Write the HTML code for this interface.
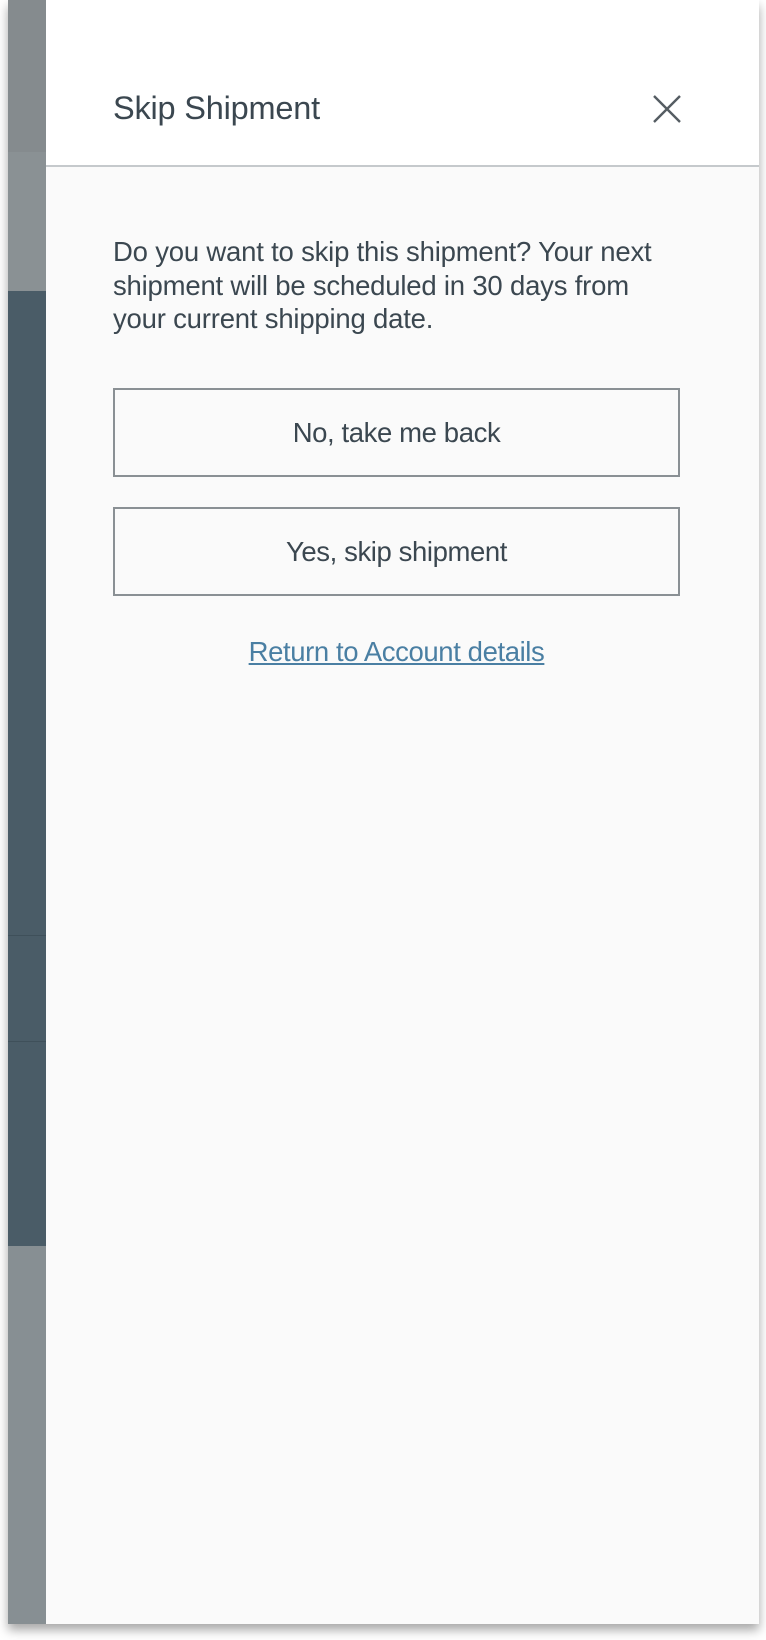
<!DOCTYPE html>
<html><head><meta charset="utf-8"><style>
html,body{margin:0;padding:0;width:766px;height:1640px;background:#fff;overflow:hidden;font-family:"Liberation Sans",sans-serif;}
.frame{position:absolute;left:8px;top:0;width:751px;height:1624px;box-shadow:0 6px 10px rgba(0,0,0,0.35);}
.strip{position:absolute;left:8px;width:38px;}
.panel{position:absolute;left:46px;top:0;width:713px;height:1624px;background:#fafafa;}
.head{position:absolute;left:0;top:0;width:713px;height:165px;background:#fff;border-bottom:2px solid #c5c9cc;}
.title{position:absolute;left:67px;top:90px;font-size:32.5px;color:#3b4750;letter-spacing:-0.2px;}
.close{position:absolute;left:606px;top:94px;}
.p{position:absolute;left:67px;top:235px;width:660px;font-size:27.5px;line-height:33.5px;color:#3b4750;letter-spacing:-0.2px;white-space:nowrap;}
.btn{position:absolute;left:67px;width:563px;height:85px;border:2px solid #8a9094;box-sizing:content-box;font-size:27.5px;color:#3b4750;text-align:center;line-height:85px;letter-spacing:-0.4px;}
.link{position:absolute;left:67px;width:567px;top:636px;text-align:center;font-size:27.5px;color:#4a7fa3;text-decoration:underline;letter-spacing:-0.4px;}
</style></head><body>
<div class="frame"></div>
<div class="strip" style="top:0;height:152px;background:#858b8e"></div>
<div class="strip" style="top:152px;height:139px;background:#8a9194"></div>
<div class="strip" style="top:291px;height:955px;background:#4a5c67"></div>
<div class="strip" style="top:935px;height:1px;background:#3f505a"></div>
<div class="strip" style="top:1041px;height:1px;background:#3f505a"></div>
<div class="strip" style="top:1246px;height:378px;background:#878f93"></div>
<div class="panel">
<div class="head">
<div class="title">Skip Shipment</div>
<svg class="close" width="30" height="30" viewBox="0 0 30 30"><path d="M2 2L28 28M28 2L2 28" stroke="#555d62" stroke-width="2.4" fill="none"/></svg>
</div>
<div class="p">Do you want to skip this shipment? Your next<br>shipment will be scheduled in 30 days from<br>your current shipping date.</div>
<div class="btn" style="top:388px">No, take me back</div>
<div class="btn" style="top:507px">Yes, skip shipment</div>
<div class="link">Return to Account details</div>
</div>
</body></html>
